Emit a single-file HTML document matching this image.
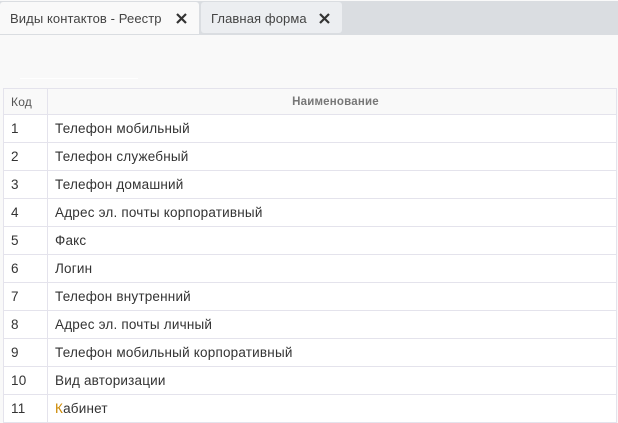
<!DOCTYPE html><html><head><meta charset="utf-8"><style>
body{margin:0;width:618px;height:423px;overflow:hidden;background:#f9f9f9;font-family:"Liberation Sans","DejaVu Sans",sans-serif;font-size:13.5px;letter-spacing:0.2px;color:#333;position:relative}
.bar{position:absolute;left:0;top:1px;width:618px;height:34px;background:#dadde1}
.tab{position:absolute;top:2px;height:32px;line-height:34px;font-size:13px;letter-spacing:0.1px;padding-left:10px;box-sizing:border-box;color:#444}
.t1{left:0;width:199px;background:#f9f9f9;border-radius:3px 3px 0 0}
.t2{left:201px;width:141px;height:31px;background:#eceef1;border-radius:3px}
.x{position:absolute;top:11px}
.line{position:absolute;left:20px;top:78px;width:118px;height:1px;background:#fff}
table{position:absolute;left:3px;top:88px;width:614px;border-collapse:collapse;background:#fff}
td,th{border:1px solid #e4e3ec;height:27px;padding:0 0 0 7px;text-align:left;font-weight:normal}
th{background:#f9f9f9;color:#555;font-size:12px;height:25px}
th.n{text-align:center;font-weight:bold;color:#777;font-size:11.5px}
td:first-child,th:first-child{width:36px}
</style></head><body>
<div class="bar"></div>
<div class="tab t1">Виды контактов - Реестр<svg class="x" style="left:176px" width="11" height="11" viewBox="0 0 11 11"><path d="M1 1L10 10M10 1L1 10" stroke="#333" stroke-width="2.2"/></svg></div>
<div class="tab t2">Главная форма<svg class="x" style="left:118px" width="11" height="11" viewBox="0 0 11 11"><path d="M1 1L10 10M10 1L1 10" stroke="#333" stroke-width="2.2"/></svg></div>
<div class="line"></div>
<table>
<tr><th>Код</th><th class="n">Наименование</th></tr>
<tr><td>1</td><td>Телефон мобильный</td></tr>
<tr><td>2</td><td>Телефон служебный</td></tr>
<tr><td>3</td><td>Телефон домашний</td></tr>
<tr><td>4</td><td>Адрес эл. почты корпоративный</td></tr>
<tr><td>5</td><td>Факс</td></tr>
<tr><td>6</td><td>Логин</td></tr>
<tr><td>7</td><td>Телефон внутренний</td></tr>
<tr><td>8</td><td>Адрес эл. почты личный</td></tr>
<tr><td>9</td><td>Телефон мобильный корпоративный</td></tr>
<tr><td>10</td><td>Вид авторизации</td></tr>
<tr><td>11</td><td><span style="color:#c80">К</span>абинет</td></tr>
</table>
</body></html>
